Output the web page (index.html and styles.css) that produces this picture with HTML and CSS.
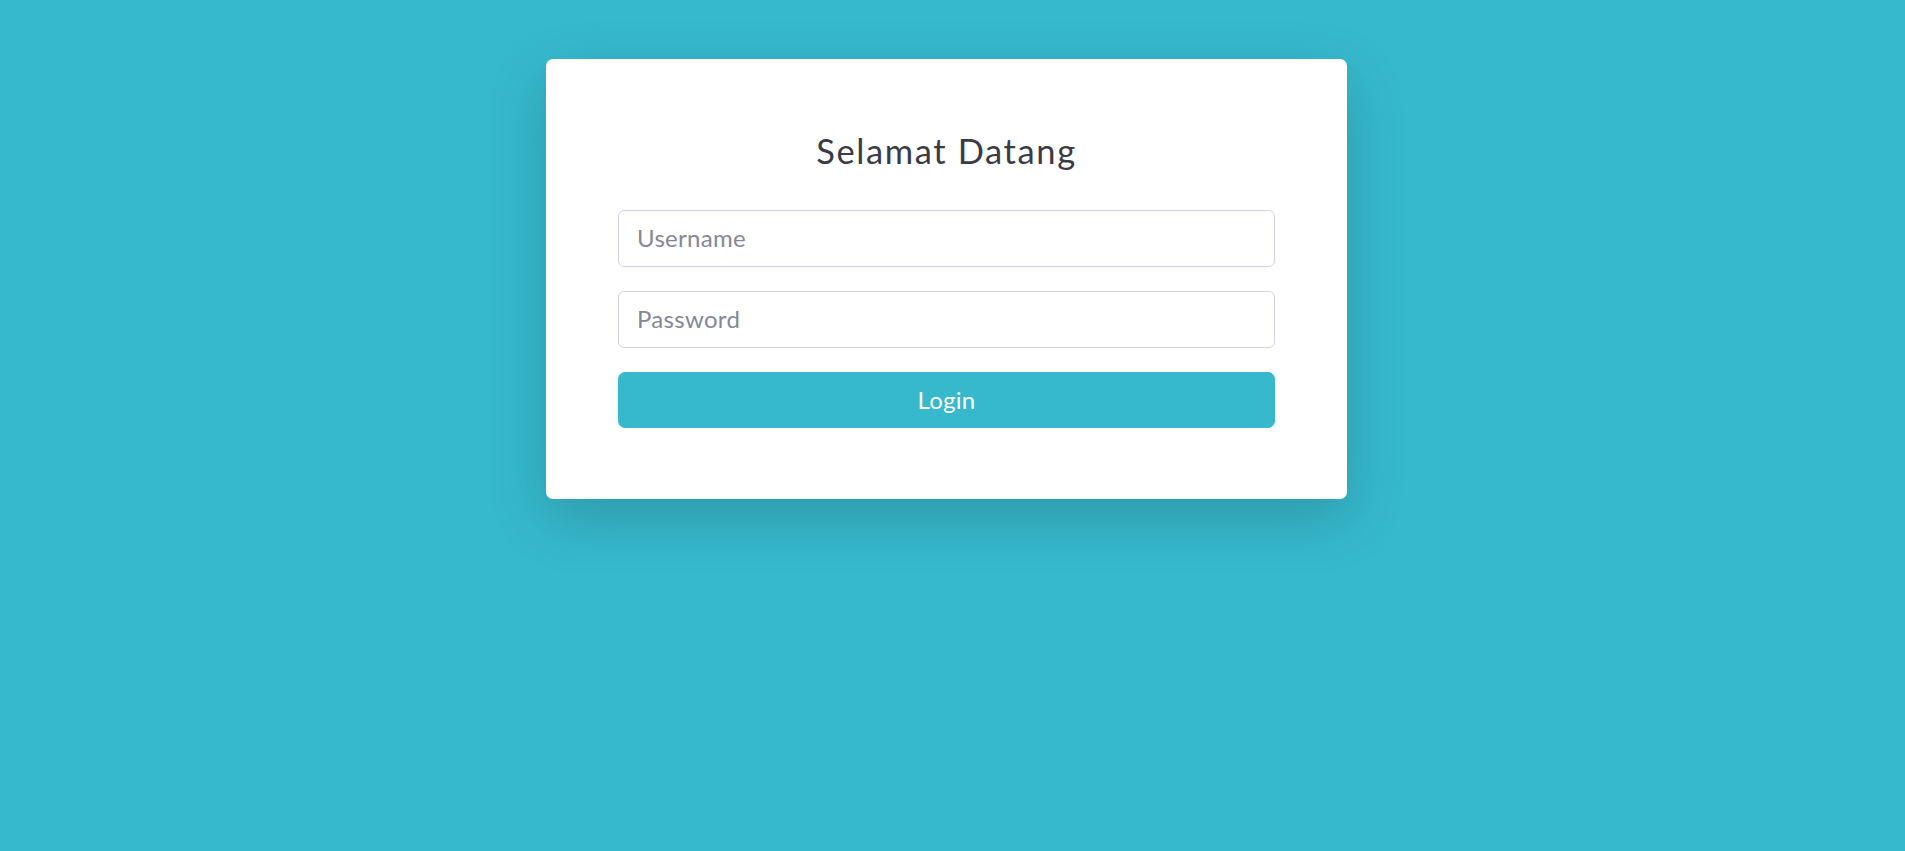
FILE: index.html
```html
<!DOCTYPE html>
<html lang="id">
<head>
<meta charset="utf-8">
<title>Login</title>
<link rel="stylesheet" href="styles.css">
</head>
<body>
<div class="page">
  <div class="card">
    <h1 class="title">Selamat Datang</h1>
    <form class="form">
      <input class="field" type="text" placeholder="Username">
      <input class="field" type="password" placeholder="Password">
      <button class="btn" type="button">Login</button>
    </form>
  </div>
</div>
</body>
</html>
```

FILE: styles.css
```css
* { box-sizing: border-box; }
html, body {
  margin: 0;
  padding: 0;
  height: 100%;
}
body {
  background: #36b9cc;
  font-family: "Lato", "Open Sans", sans-serif;
  color: #3a3b45;
}
.page {
  padding: 59px 12px 0 0;
  display: flex;
  justify-content: center;
}
.card {
  width: 801px;
  background: #fff;
  border-radius: 7px;
  box-shadow: 0 19px 58px rgba(0, 0, 0, 0.175);
  padding: 71px 72px 71px;
}
.title {
  margin: 0 0 39px;
  font-size: 34.5px;
  font-weight: 400;
  letter-spacing: 1.6px;
  line-height: 1.2;
  text-align: center;
  color: #3a3b45;
}
.form {
  display: flex;
  flex-direction: column;
  gap: 24px;
}
.field {
  height: 57px;
  width: 100%;
  border: 1px solid #d1d3e2;
  border-radius: 6px;
  padding: 0 18px 2px;
  font-family: inherit;
  font-size: 24px;
  letter-spacing: 0.3px;
  color: #6e707e;
  background: #fff;
  outline: none;
}
.field::placeholder {
  color: #858796;
  opacity: 1;
}
.btn {
  height: 56px;
  width: 100%;
  border: 1px solid #36b9cc;
  border-radius: 7px;
  background: #36b9cc;
  color: #fff;
  font-family: inherit;
  font-size: 24px;
  letter-spacing: 0.3px;
  padding: 0 0 2px;
  cursor: pointer;
}
```
